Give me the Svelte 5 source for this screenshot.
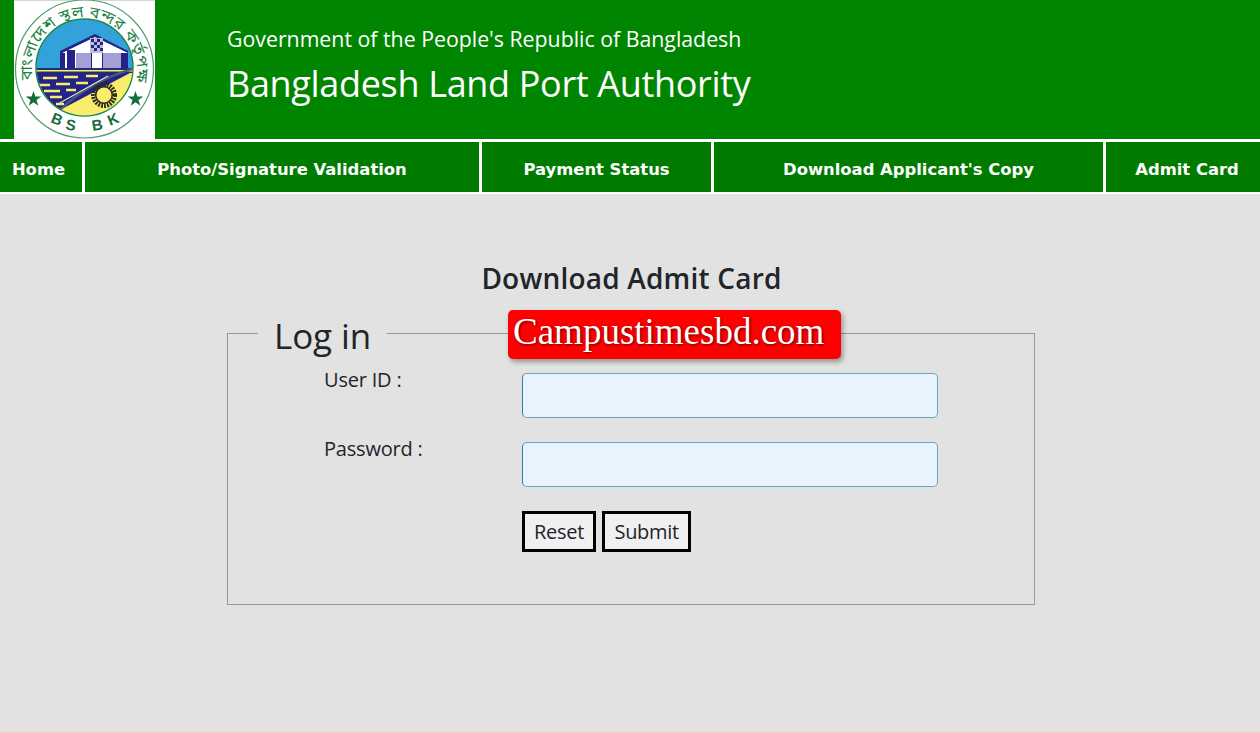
<script>
  const navItems = [
    "Home",
    "Photo/Signature Validation",
    "Payment Status",
    "Download Applicant's Copy",
    "Admit Card",
  ];
  const sealLetters = [
    { ch: "B", x: 41, y: 124, r: 22 },
    { ch: "S", x: 56, y: 130, r: 10 },
    { ch: "B", x: 84, y: 130, r: -10 },
    { ch: "K", x: 101, y: 124, r: -22 },
  ];
  let userId = $state("");
  let password = $state("");

  function reset() {
    userId = "";
    password = "";
  }
</script>

<div class="page">
  <header class="top">
    <div class="logo">
      <svg viewBox="0 0 141 139" width="141" height="139">
        <defs>
          <path id="ring" d="M19 80 A52.5 52.5 0 1 1 122 80" />
          <clipPath id="disc"><circle cx="70.5" cy="67.5" r="48" /></clipPath>
        </defs>
        <circle cx="70.5" cy="69" r="69" fill="#fff" stroke="#4f9f6f" stroke-width="1.2" />
        <text class="bn"><textPath href="#ring" textLength="187">বাংলাদেশ স্থল বন্দর কর্তৃপক্ষ</textPath></text>
        <circle cx="70.5" cy="67.5" r="48.5" fill="#33a2da" stroke="#1a8a4a" stroke-width="1.5" />
        <g clip-path="url(#disc)">
          <!-- shed -->
          <path d="M46 52 81 35l33 17v16H46z" fill="#fff" />
          <path d="M46 51 81 34l33 17v2L81 37 46 54z" fill="#23238a" />
          <path d="M76 38h13v15H76z" fill="#fff" />
          <path d="M76 38h13v15H76z" fill="#3b3b96" opacity=".35" />
          <path d="M77 39h3v3h-3zM83 39h3v3h-3zM80 42h3v3h-3zM86 42h3v3h-3zM77 45h3v3h-3zM83 45h3v3h-3zM80 48h3v3h-3zM86 48h3v3h-3z" fill="#23238a" />
          <path d="M46 53h5v15h-5zM53 50h8v18h-8zM77 53h1v15h-1zM88 53h1v15h-1zM107 53h7v15h-7z" fill="#23238a" />
          <path d="M62 53h15v15H62zM89 53h18v15H89z" fill="#a4a0d6" />
          <!-- ground -->
          <path d="M20 68h100v52H20z" fill="#f8ee6c" />
          <path d="M20 68h100v2H20zM20 71.5h100v1.5H20z" fill="#23306e" />
          <path d="M20 73h96L46 110l-26 6z" fill="#23238a" />
          <path d="M29 78h14M50 77h14M72 76h12M24 85h12M42 84h14M62 83h12M30 91h16M52 90h10M36 97h12M42 104h8" stroke="#f8ee6c" stroke-width="2.4" fill="none" />
          <path d="M46 110C64 92 92 76 122 68" stroke="#4b5a78" stroke-width="2.4" fill="none" />
          <path d="M44 104 94 76" stroke="#dfe5c8" stroke-width="1.2" fill="none" />
          <circle cx="90" cy="95" r="10.5" fill="none" stroke="#2b2b1e" stroke-width="5" stroke-dasharray="1.8 1.1" />
          <circle cx="90" cy="95" r="8.2" fill="#f8ee6c" stroke="#2b2b1e" stroke-width="1.4" />
        </g>
        <path d="M19.5 91l1.9 5.6h5.9l-4.8 3.5 1.8 5.6-4.8-3.5-4.8 3.5 1.8-5.6-4.8-3.5h5.9zM121.5 91l1.9 5.6h5.9l-4.8 3.5 1.8 5.6-4.8-3.5-4.8 3.5 1.8-5.6-4.8-3.5h5.9z" fill="#146c3a" />
        {#each sealLetters as l}
          <text class="bsbk" text-anchor="middle" transform="translate({l.x} {l.y}) rotate({l.r})">{l.ch}</text>
        {/each}
      </svg>
    </div>
    <div class="titles">
      <div class="gov">Government of the People's Republic of Bangladesh</div>
      <div class="auth">Bangladesh Land Port Authority</div>
    </div>
  </header>

  <nav class="menu">
    {#each navItems as item}
      <a href="#top">{item}</a>
    {/each}
  </nav>

  <main class="content">
    <h1>Download Admit Card</h1>
    <div class="form-wrap">
      <div class="badge">Campustimesbd.com</div>
      <fieldset>
        <legend>Log in</legend>
        <div class="row">
          <label for="uid">User ID :</label>
          <input id="uid" type="text" bind:value={userId} />
        </div>
        <div class="row">
          <label for="pwd">Password :</label>
          <input id="pwd" type="password" bind:value={password} />
        </div>
        <div class="actions">
          <button type="button" onclick={reset}>Reset</button>
          <button type="button">Submit</button>
        </div>
      </fieldset>
    </div>
  </main>
</div>

<style>
  :global(body) {
    margin: 0;
    background: #e2e2e2;
  }
  .page {
    height: 732px;
    overflow: hidden;
    display: flex;
    flex-direction: column;
    font-family: "Open Sans", "Noto Sans", sans-serif;
    color: #212529;
  }
  .top {
    height: 139px;
    flex: none;
    background: #008500;
    display: flex;
    padding-left: 14px;
    box-sizing: border-box;
  }
  .logo {
    width: 141px;
    height: 139px;
    background: #fff;
    box-shadow: inset 0 1px #d8d8d8;
    flex: none;
  }
  .logo svg {
    display: block;
  }
  .bn {
    font-family: "Noto Sans Bengali", "Noto Sans", sans-serif;
    font-size: 16px;
    fill: #1d8045;
  }
  .bsbk {
    font-family: "Liberation Sans", sans-serif;
    font-weight: 700;
    font-size: 15px;
    fill: #146c3a;
  }
  .titles {
    margin-left: 72px;
    padding-top: 24px;
    color: #fff;
  }
  .gov {
    font-size: 21.3px;
    line-height: 30px;
  }
  .auth {
    font-size: 36px;
    line-height: 50px;
    margin-top: 5px;
    letter-spacing: -0.33px;
  }
  .menu {
    flex: none;
    display: grid;
    grid-template-columns: 82px 394px 229px 389px 1fr;
    gap: 3px;
    height: 50px;
    padding: 3px 0 2px;
    background: #fff;
  }
  .menu a {
    background: #007b00;
    color: #fff;
    display: flex;
    align-items: center;
    justify-content: center;
    padding-top: 4px;
    box-sizing: border-box;
    font-family: "DejaVu Sans", sans-serif;
    font-weight: 700;
    font-size: 16.4px;
    text-decoration: none;
  }
  .menu a:first-child {
    padding-right: 5px;
  }
  .menu a:last-child {
    padding-left: 8px;
  }
  .content {
    flex: 1;
    background: #e2e2e2;
  }
  h1 {
    margin: 65px 0 0;
    text-align: center;
    font-size: 28px;
    line-height: 38px;
    font-weight: 600;
    padding-left: 3px;
    letter-spacing: 0.2px;
  }
  .form-wrap {
    position: relative;
    width: 808px;
    margin: 10px 0 0 227px;
  }
  .badge {
    position: absolute;
    left: 281px;
    top: 3px;
    width: 333px;
    height: 49px;
    box-sizing: border-box;
    z-index: 1;
    background: #f00;
    color: #fff;
    border-radius: 5px;
    box-shadow: 2px 3px 5px rgba(0, 0, 0, 0.35);
    font-family: "Liberation Serif", serif;
    font-size: 37px;
    line-height: 44px;
    padding-left: 5px;
    white-space: nowrap;
    text-shadow: 1px 1px 3px rgba(0, 0, 0, 0.6);
  }
  fieldset {
    margin: 0;
    height: 298px;
    box-sizing: border-box;
    border: 1px solid #999;
    padding: 14px 0 0 96px;
  }
  legend {
    margin-left: -66px;
    padding: 6px 16px 0;
    font-size: 35px;
    line-height: 46px;
    letter-spacing: -0.1px;
  }
  .row {
    display: flex;
    height: 44px;
    margin-bottom: 25px;
  }
  label {
    width: 198px;
    flex: none;
    font-size: 20px;
    line-height: 14px;
    letter-spacing: -0.2px;
  }
  input {
    width: 416px;
    height: 45px;
    box-sizing: border-box;
    background: #e8f3fd;
    border: 1px solid #6ba5c4;
    border-left-color: #2f7fa8;
    border-radius: 5px;
    outline: none;
  }
  .actions {
    margin: 0 0 0 198px;
    display: flex;
    gap: 6px;
  }
  button {
    height: 41px;
    box-sizing: border-box;
    background: #f0f0f0;
    border: 3px solid #000;
    border-radius: 0;
    padding: 0 9px;
    font-family: inherit;
    font-size: 20px;
    letter-spacing: -0.3px;
    color: #212529;
  }
  button:last-child {
    padding: 0 9.5px;
  }
</style>
